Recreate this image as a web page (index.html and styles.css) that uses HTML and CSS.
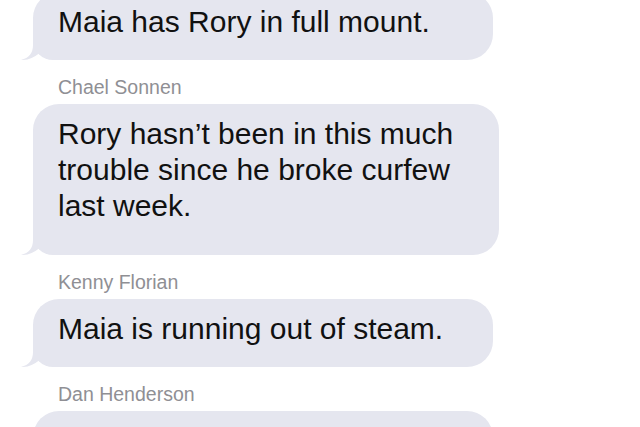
FILE: index.html
```html
<!DOCTYPE html>
<html lang="en">
<head>
<meta charset="utf-8">
<title>Messages</title>
<link rel="stylesheet" href="styles.css">
</head>
<body>
<main class="thread">
  <div class="bubble first">
    <p class="text">Maia has Rory in full mount.</p>
    <svg class="tail" viewBox="0 0 22 24" aria-hidden="true"><path d="M12 0 L12 9 C12 17 8 22 0 24 C7 24.3 13 21.5 18 17.5 L18 0 Z"/></svg>
  </div>
  <div class="sender">Chael Sonnen</div>
  <div class="bubble wide tall">
    <p class="text">Rory hasn’t been in this much<br>trouble since he broke curfew<br>last week.</p>
    <svg class="tail" viewBox="0 0 22 24" aria-hidden="true"><path d="M12 0 L12 9 C12 17 8 22 0 24 C7 24.3 13 21.5 18 17.5 L18 0 Z"/></svg>
  </div>
  <div class="sender">Kenny Florian</div>
  <div class="bubble">
    <p class="text">Maia is running out of steam.</p>
    <svg class="tail" viewBox="0 0 22 24" aria-hidden="true"><path d="M12 0 L12 9 C12 17 8 22 0 24 C7 24.3 13 21.5 18 17.5 L18 0 Z"/></svg>
  </div>
  <div class="sender">Dan Henderson</div>
  <div class="bubble last">
    <p class="text">&nbsp;</p>
  </div>
</main>
</body>
</html>
```

FILE: styles.css
```css
html, body {
  margin: 0;
  padding: 0;
  background: #ffffff;
}

.thread {
  display: flex;
  flex-direction: column;
  align-items: flex-start;
  height: 427px;
  overflow: hidden;
  padding-left: 33px;
  font-family: "Liberation Sans", Arial, sans-serif;
}

.bubble {
  position: relative;
  flex-shrink: 0;
  width: 460px;
  box-sizing: border-box;
  padding: 12px 20px 20px 25px;
  background: #e5e6ef;
  border-radius: 26px 26px 26px 20px;
}

.bubble.first {
  margin-top: -8px;
}

.bubble.wide {
  width: 466px;
}

.bubble.tall {
  padding-bottom: 31px;
}

.text {
  margin: 0;
  font-size: 30px;
  line-height: 36px;
  color: #111111;
  white-space: nowrap;
}

.tail {
  position: absolute;
  left: -12px;
  bottom: 0;
  width: 22px;
  height: 24px;
  fill: #e5e6ef;
  display: block;
}

.sender {
  flex-shrink: 0;
  margin: 17px 0 7px 25px;
  font-size: 19.5px;
  line-height: 20px;
  color: #8f8f94;
}
```
